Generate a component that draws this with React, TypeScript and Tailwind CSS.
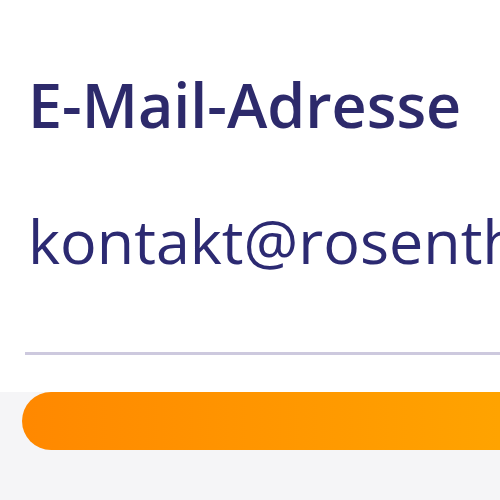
export default function App() {
  return (
    <div className="h-[500px] w-[500px] overflow-hidden bg-[#f5f5f7] font-['Open_Sans',sans-serif]">
      <div className="bg-white pl-[28px] pt-[74px] pb-[37px]">
        <h2 className="whitespace-nowrap text-[61px] font-semibold leading-none text-[#2d2a6b]">E-Mail-Adresse</h2>
        <p className="mt-[75px] whitespace-nowrap text-[61px] leading-none text-[#2c2a72]">kontakt@rosenthal-kanzlei.de</p>
        <div className="mt-[81px] -ml-[3px] h-[3px] bg-[#cdc9de]" />
      </div>
      <div className="pl-[22px]">
        <button className="h-[58px] w-full rounded-l-full bg-gradient-to-r from-[#ff8800] to-[#ffa300]" />
      </div>
    </div>
  )
}
